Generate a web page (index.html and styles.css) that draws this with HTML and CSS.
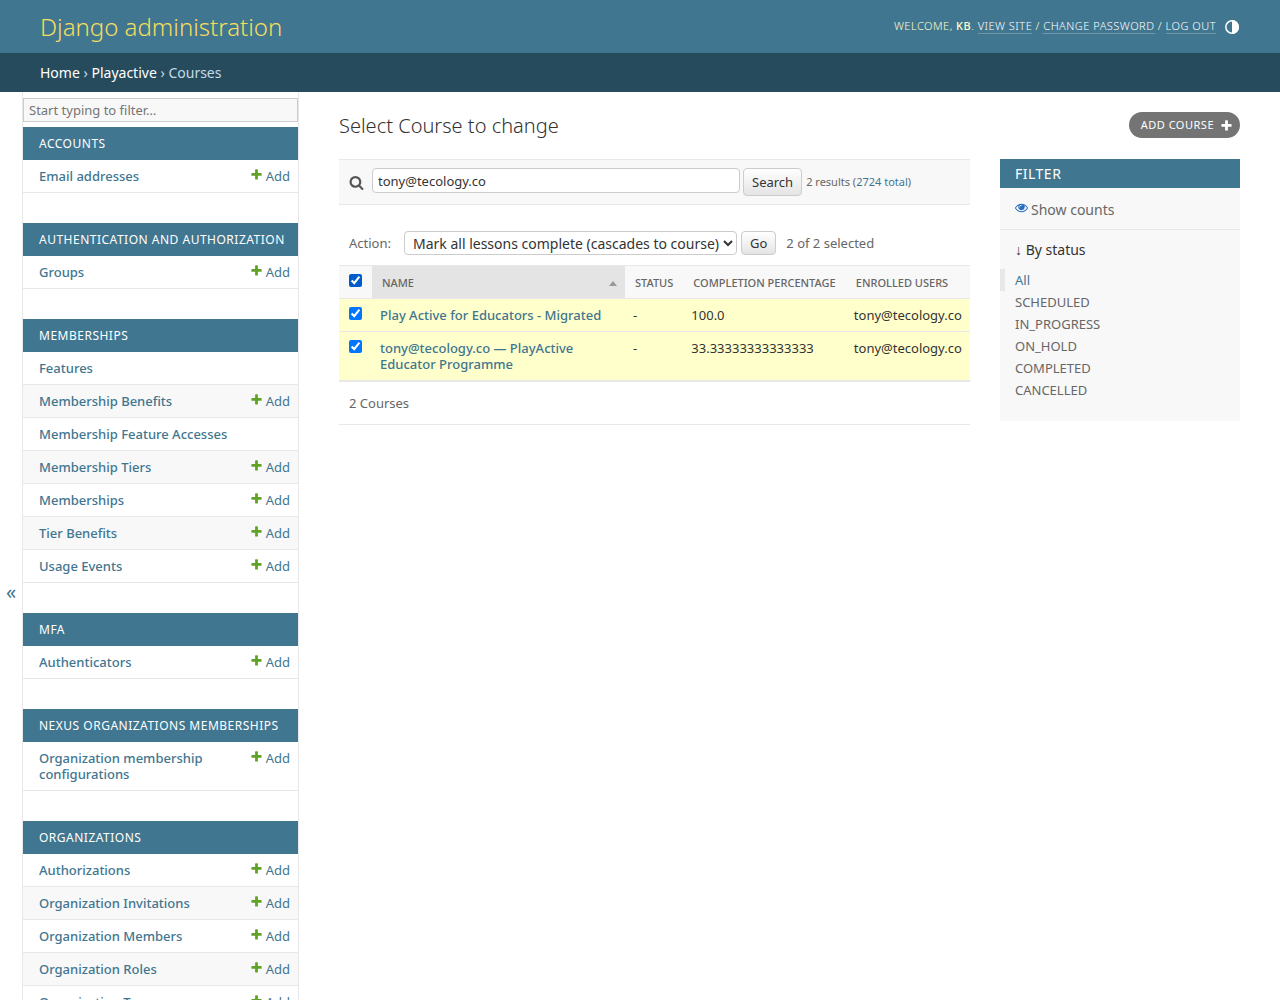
FILE: index.html
```
<!DOCTYPE html>
<html lang="en">
  <head>
    <meta charset="utf-8">
    <title>Select Course to change | Django administration</title>
    <link rel="stylesheet" href="styles.css">
  </head>
  <body>
    <svg class="sprite" aria-hidden="true">
      <symbol id="icon-add" viewBox="0 0 1792 1792">
        <path d="M1600 796v192q0 40-28 68t-68 28h-416v416q0 40-28 68t-68 28h-192q-40 0-68-28t-28-68v-416h-416q-40 0-68-28t-28-68v-192q0-40 28-68t68-28h416v-416q0-40 28-68t68-28h192q40 0 68 28t28 68v416h416q40 0 68 28t28 68z"/>
      </symbol>
      <symbol id="icon-search" viewBox="0 0 1792 1792">
        <path d="M1216 832q0-185-131.5-316.5t-316.5-131.5-316.5 131.5-131.5 316.5 131.5 316.5 316.5 131.5 316.5-131.5 131.5-316.5zm512 832q0 52-38 90t-90 38q-54 0-90-38l-343-342q-179 124-399 124-143 0-273.5-55.5t-225-150-150-225-55.5-273.5 55.5-273.5 150-225 225-150 273.5-55.5 273.5 55.5 225 150 150 225 55.5 273.5q0 220-124 399l343 343q37 37 37 90z"/>
      </symbol>
      <symbol id="icon-view" viewBox="0 0 1792 1792">
        <path d="M1664 960q-152-236-381-353 61 104 61 225 0 185-131.5 316.5t-316.5 131.5-316.5-131.5-131.5-316.5q0-121 61-225-229 117-381 353 133 205 333.5 326.5t434.5 121.5 434.5-121.5 333.5-326.5zm-720-384q0-20-14-34t-34-14q-125 0-214.5 89.5t-89.5 214.5q0 20 14 34t34 14 34-14 14-34q0-86 61-147t147-61q20 0 34-14t14-34zm848 384q0 34-20 69-140 230-376.5 368.5t-499.5 138.5-499.5-139-376.5-368q-20-35-20-69t20-69q140-229 376.5-368t499.5-139 499.5 139 376.5 368q20 35 20 69z"/>
      </symbol>
    </svg>

    <header class="header">
      <div class="site-name"><a href="#">Django administration</a></div>
      <div class="user-tools">
        <span>Welcome, <strong>KB</strong>. <a href="#">View site</a> / <a href="#">Change password</a> / <a href="#">Log out</a></span>
        <button class="theme-toggle" type="button" aria-label="Toggle theme">
          <svg viewBox="0 0 14 14"><circle cx="7" cy="7" r="6.2"/><path d="M7 0a7 7 0 0 1 0 14z"/></svg>
        </button>
      </div>
    </header>

    <nav class="breadcrumbs" aria-label="Breadcrumbs">
      <a href="#">Home</a> &rsaquo; <a href="#">Playactive</a> &rsaquo; Courses
    </nav>

    <div class="main">
      <button class="toggle-nav" type="button" aria-label="Toggle navigation">«</button>
      <nav class="sidebar" aria-label="Sidebar">
        <input class="nav-filter" type="search" placeholder="Start typing to filter…" aria-label="Filter navigation items">

        <table class="module">
          <caption><a href="#">Accounts</a></caption>
          <tr>
            <th scope="row"><a href="#">Email addresses</a></th>
            <td><a href="#"><svg class="add-icon"><use href="#icon-add"/></svg>Add</a></td>
          </tr>
        </table>

        <table class="module">
          <caption><a href="#">Authentication and Authorization</a></caption>
          <tr>
            <th scope="row"><a href="#">Groups</a></th>
            <td><a href="#"><svg class="add-icon"><use href="#icon-add"/></svg>Add</a></td>
          </tr>
        </table>

        <table class="module">
          <caption><a href="#">Memberships</a></caption>
          <tr>
            <th scope="row"><a href="#">Features</a></th>
            <td></td>
          </tr>
          <tr>
            <th scope="row"><a href="#">Membership Benefits</a></th>
            <td><a href="#"><svg class="add-icon"><use href="#icon-add"/></svg>Add</a></td>
          </tr>
          <tr>
            <th scope="row"><a href="#">Membership Feature Accesses</a></th>
            <td></td>
          </tr>
          <tr>
            <th scope="row"><a href="#">Membership Tiers</a></th>
            <td><a href="#"><svg class="add-icon"><use href="#icon-add"/></svg>Add</a></td>
          </tr>
          <tr>
            <th scope="row"><a href="#">Memberships</a></th>
            <td><a href="#"><svg class="add-icon"><use href="#icon-add"/></svg>Add</a></td>
          </tr>
          <tr>
            <th scope="row"><a href="#">Tier Benefits</a></th>
            <td><a href="#"><svg class="add-icon"><use href="#icon-add"/></svg>Add</a></td>
          </tr>
          <tr>
            <th scope="row"><a href="#">Usage Events</a></th>
            <td><a href="#"><svg class="add-icon"><use href="#icon-add"/></svg>Add</a></td>
          </tr>
        </table>

        <table class="module">
          <caption><a href="#">MFA</a></caption>
          <tr>
            <th scope="row"><a href="#">Authenticators</a></th>
            <td><a href="#"><svg class="add-icon"><use href="#icon-add"/></svg>Add</a></td>
          </tr>
        </table>

        <table class="module">
          <caption><a href="#">Nexus Organizations Memberships</a></caption>
          <tr>
            <th scope="row"><a href="#">Organization membership configurations</a></th>
            <td><a href="#"><svg class="add-icon"><use href="#icon-add"/></svg>Add</a></td>
          </tr>
        </table>

        <table class="module">
          <caption><a href="#">Organizations</a></caption>
          <tr>
            <th scope="row"><a href="#">Authorizations</a></th>
            <td><a href="#"><svg class="add-icon"><use href="#icon-add"/></svg>Add</a></td>
          </tr>
          <tr>
            <th scope="row"><a href="#">Organization Invitations</a></th>
            <td><a href="#"><svg class="add-icon"><use href="#icon-add"/></svg>Add</a></td>
          </tr>
          <tr>
            <th scope="row"><a href="#">Organization Members</a></th>
            <td><a href="#"><svg class="add-icon"><use href="#icon-add"/></svg>Add</a></td>
          </tr>
          <tr>
            <th scope="row"><a href="#">Organization Roles</a></th>
            <td><a href="#"><svg class="add-icon"><use href="#icon-add"/></svg>Add</a></td>
          </tr>
          <tr>
            <th scope="row"><a href="#">Organization Types</a></th>
            <td><a href="#"><svg class="add-icon"><use href="#icon-add"/></svg>Add</a></td>
          </tr>
        </table>
      </nav>

      <main class="content">
        <div class="title-row">
          <h1>Select Course to change</h1>
          <a class="add-link" href="#">Add Course<svg><use href="#icon-add"/></svg></a>
        </div>

        <div class="changelist">
          <div class="results-column">
            <form class="toolbar" role="search">
              <label for="searchbar"><svg class="search-icon" role="img" aria-label="Search"><use href="#icon-search"/></svg></label>
              <input type="text" id="searchbar" name="q" value="tony@tecology.co">
              <button type="submit">Search</button>
              <span class="result-count">2 results (<a href="#">2724 total</a>)</span>
            </form>

            <form>
              <div class="actions">
                <label for="action">Action:</label>
                <select id="action" name="action">
                  <option selected>Mark all lessons complete (cascades to course)</option>
                </select>
                <button type="button">Go</button>
                <span class="action-counter">2 of 2 selected</span>
              </div>

              <table class="result-list">
                <thead>
                  <tr>
                    <th class="check-column"><input type="checkbox" checked aria-label="Select all courses"></th>
                    <th class="name-column sorted">
                      <div class="sort-label">
                        <a href="#">Name</a>
                        <svg class="sort-arrow" viewBox="0 0 8 5"><path d="M4 0l4 5H0z"/></svg>
                      </div>
                    </th>
                    <th>Status</th>
                    <th>Completion percentage</th>
                    <th>Enrolled users</th>
                  </tr>
                </thead>
                <tbody>
                  <tr>
                    <td class="check-column"><input type="checkbox" checked aria-label="Select Play Active for Educators - Migrated"></td>
                    <th scope="row"><a href="#">Play Active for Educators - Migrated</a></th>
                    <td>-</td>
                    <td>100.0</td>
                    <td>tony@tecology.co</td>
                  </tr>
                  <tr>
                    <td class="check-column"><input type="checkbox" checked aria-label="Select PlayActive Educator Programme"></td>
                    <th scope="row"><a href="#">tony@tecology.co — PlayActive Educator Programme</a></th>
                    <td>-</td>
                    <td>33.33333333333333</td>
                    <td>tony@tecology.co</td>
                  </tr>
                </tbody>
              </table>

              <p class="paginator">2 Courses</p>
            </form>
          </div>

          <aside class="filter">
            <h2>Filter</h2>
            <div class="filter-extra">
              <a href="#"><svg class="view-icon"><use href="#icon-view"/></svg>Show counts</a>
            </div>
            <details open>
              <summary>By status</summary>
              <ul>
                <li class="selected"><a href="#">All</a></li>
                <li><a href="#">SCHEDULED</a></li>
                <li><a href="#">IN_PROGRESS</a></li>
                <li><a href="#">ON_HOLD</a></li>
                <li><a href="#">COMPLETED</a></li>
                <li><a href="#">CANCELLED</a></li>
              </ul>
            </details>
          </aside>
        </div>
      </main>
    </div>
  </body>
</html>
```
FILE: styles.css
```
:root {
  --secondary: #417690;
  --accent: #f5dd5d;
  --body-fg: #333;
  --body-quiet: #666;
  --darkened-bg: #f8f8f8;
  --hairline: #e8e8e8;
  --border: #ccc;
}

* {
  box-sizing: border-box;
}

body {
  margin: 0;
  font-family: "Noto Sans", "Liberation Sans", sans-serif;
  font-size: 14px;
  color: var(--body-fg);
  background: #fff;
}

a {
  color: var(--secondary);
  text-decoration: none;
}

input,
select,
button {
  font-family: inherit;
  font-size: 13px;
  color: var(--body-fg);
}

.sprite {
  display: none;
}

/* Header */

.header {
  display: flex;
  justify-content: space-between;
  align-items: center;
  height: 53px;
  padding: 0 40px;
  background: var(--secondary);
  color: #ffc;
}

.site-name {
  font-size: 24px;
  font-weight: 300;
  line-height: 32px;
}

.site-name a {
  color: var(--accent);
}

.user-tools {
  display: flex;
  align-items: center;
  gap: 8px;
  font-size: 11px;
  font-weight: 300;
  line-height: 14px;
  letter-spacing: 0.5px;
  text-transform: uppercase;
}

.user-tools span {
  padding-bottom: 2px;
}

.user-tools strong {
  font-weight: 500;
}

.user-tools a {
  color: #fff;
  border-bottom: 1px solid rgba(255, 255, 255, 0.25);
}

.theme-toggle {
  padding: 0;
  border: 0;
  background: none;
}

.theme-toggle svg {
  display: block;
  width: 14px;
  height: 14px;
  margin: 1px;
}

.theme-toggle circle {
  fill: none;
  stroke: #fff;
  stroke-width: 1.5;
}

.theme-toggle path {
  fill: #fff;
}

.breadcrumbs {
  padding: 10px 40px;
  line-height: 19px;
  background: #264b5d;
  color: #c4dce8;
}

.breadcrumbs a {
  color: #fff;
}

.main {
  display: flex;
  align-items: flex-start;
}

/* Sidebar */

.toggle-nav {
  position: sticky;
  top: 0;
  flex: 0 0 23px;
  height: 100vh;
  padding: 0 0 2px;
  border: 0;
  border-right: 1px solid var(--hairline);
  background: #fff;
  color: var(--secondary);
  font-size: 20px;
}

.sidebar {
  position: sticky;
  top: 0;
  flex: 0 0 276px;
  height: 100vh;
  padding-top: 6px;
  border-right: 1px solid var(--hairline);
  overflow: auto;
}

.nav-filter {
  display: block;
  width: 100%;
  height: 24px;
  margin: 0 0 5px;
  padding: 0 5px;
  border: 1px solid var(--border);
  background: var(--darkened-bg);
  appearance: none;
}

.module {
  width: 100%;
  margin-bottom: 30px;
  border-collapse: collapse;
  font-size: 13px;
  line-height: 16px;
}

.module caption {
  padding: 8px 0 8px 16px;
  background: var(--secondary);
  font-size: 12px;
  line-height: 17px;
  letter-spacing: 0.5px;
  text-align: left;
  text-transform: uppercase;
  white-space: nowrap;
}

.module caption a {
  color: #fff;
}

.module tr:nth-child(even) {
  background: var(--darkened-bg);
}

.module th,
.module td {
  padding: 8px;
  border-bottom: 1px solid var(--hairline);
  vertical-align: top;
}

.module th {
  padding-left: 16px;
  font-weight: 500;
  text-align: left;
}

.module td {
  text-align: right;
  white-space: nowrap;
}

.add-icon {
  width: 13px;
  height: 13px;
  margin-right: 3px;
  fill: #5fa225;
}

/* Content */

.content {
  flex: 1;
  min-width: 0;
  padding: 20px 40px;
}

.title-row {
  display: flex;
  justify-content: space-between;
  align-items: flex-start;
  margin-bottom: 20px;
}

h1 {
  margin: 0;
  font-size: 20px;
  font-weight: 300;
  line-height: 27px;
}

.add-link {
  display: flex;
  align-items: center;
  gap: 6px;
  padding: 5px 7px 5px 12px;
  border-radius: 13px;
  background: #747474;
  color: #fff;
  font-size: 11px;
  line-height: 16px;
  letter-spacing: 0.5px;
  text-transform: uppercase;
}

.add-link svg {
  width: 13px;
  height: 13px;
  fill: #fff;
}

.changelist {
  display: flex;
  align-items: flex-start;
  gap: 30px;
}

.results-column {
  flex: 1;
  min-width: 0;
}

.toolbar {
  display: flex;
  align-items: flex-start;
  padding: 8px 10px;
  border-top: 1px solid var(--hairline);
  border-bottom: 1px solid var(--hairline);
  background: var(--darkened-bg);
}

.search-icon {
  display: block;
  width: 15px;
  height: 15px;
  margin: 7px 8px 0 0;
  fill: #555;
}

.toolbar input {
  flex: 0 1 368px;
  min-width: 0;
  height: 25px;
  padding: 0 5px;
  border: 1px solid var(--border);
  border-radius: 4px;
}

.toolbar button,
.actions button {
  height: 28px;
  padding: 0 8px;
  border: 1px solid var(--border);
  border-radius: 4px;
  background: #fff linear-gradient(#fff, #e4e4e4);
}

.toolbar button {
  margin: 0 4px 0 3px;
}

.result-count {
  color: var(--body-quiet);
  font-size: 11px;
  line-height: 28px;
  white-space: nowrap;
}

.actions {
  display: flex;
  align-items: center;
  padding: 26px 10px 10px;
  color: var(--body-quiet);
  font-size: 13px;
}

.actions select {
  height: 24px;
  margin: 0 4px 0 13px;
  padding: 0 0 0 4px;
  border: 1px solid var(--border);
  border-radius: 4px;
  background: #fff;
  font-size: 14px;
}

.actions button {
  height: 24px;
}

.action-counter {
  margin-left: 10px;
}

.result-list {
  width: 100%;
  border-collapse: separate;
  border-spacing: 0;
  border-bottom: 1px solid var(--hairline);
  font-size: 13px;
  line-height: 16px;
}

.result-list th,
.result-list td {
  padding: 8px;
  border-bottom: 1px solid var(--hairline);
  text-align: left;
  vertical-align: top;
}

.result-list thead th {
  padding: 9px 10px 7px;
  border-top: 1px solid var(--hairline);
  background: var(--darkened-bg);
  color: var(--body-quiet);
  font-size: 11px;
  font-weight: 500;
  text-transform: uppercase;
  white-space: nowrap;
}

.result-list thead .sorted {
  background: #e4e4e4;
}

.result-list thead a {
  color: var(--body-quiet);
}

.result-list tbody tr {
  background: #ffc;
}

.result-list tbody th {
  font-weight: 500;
}

.result-list .check-column {
  width: 33px;
  padding: 8px 10px;
}

.name-column {
  width: 253px;
}

.sort-label {
  display: flex;
  justify-content: space-between;
  align-items: center;
}

.sort-arrow {
  width: 8px;
  height: 5px;
  margin-right: -2px;
  fill: #999;
}

.check-column input {
  display: block;
  width: 13px;
  height: 13px;
  margin: 0;
}

thead .check-column input {
  accent-color: #005cc8;
}

.paginator {
  margin: 0;
  padding: 13px 10px 12px;
  border-bottom: 1px solid var(--hairline);
  color: var(--body-quiet);
  font-size: 13px;
  line-height: 17px;
}

/* Filter panel */

.filter {
  flex: 0 0 240px;
  padding-bottom: 20px;
  background: var(--darkened-bg);
}

.filter h2 {
  margin: 0;
  padding: 5px 15px;
  background: var(--secondary);
  color: #fff;
  font-size: 14px;
  font-weight: 400;
  line-height: 19px;
  letter-spacing: 0.5px;
  text-transform: uppercase;
}

.filter-extra {
  padding: 12px 15px 10px;
  border-bottom: 1px solid var(--hairline);
  line-height: 19px;
}

.filter-extra a,
.filter li a {
  color: var(--body-quiet);
}

.view-icon {
  width: 13px;
  height: 13px;
  margin-right: 3px;
  vertical-align: 1px;
  fill: #2b70bf;
}

.filter summary {
  padding: 10px 15px;
  line-height: 19px;
  list-style: none;
}

.filter summary::before {
  content: "↓ ";
}

.filter ul {
  margin: 0;
  padding: 0;
  list-style: none;
  font-size: 13px;
}

.filter li {
  padding-left: 15px;
  line-height: 22px;
}

.filter .selected {
  padding-left: 10px;
  border-left: 5px solid var(--hairline);
}

.filter .selected a {
  color: var(--secondary);
}
```
